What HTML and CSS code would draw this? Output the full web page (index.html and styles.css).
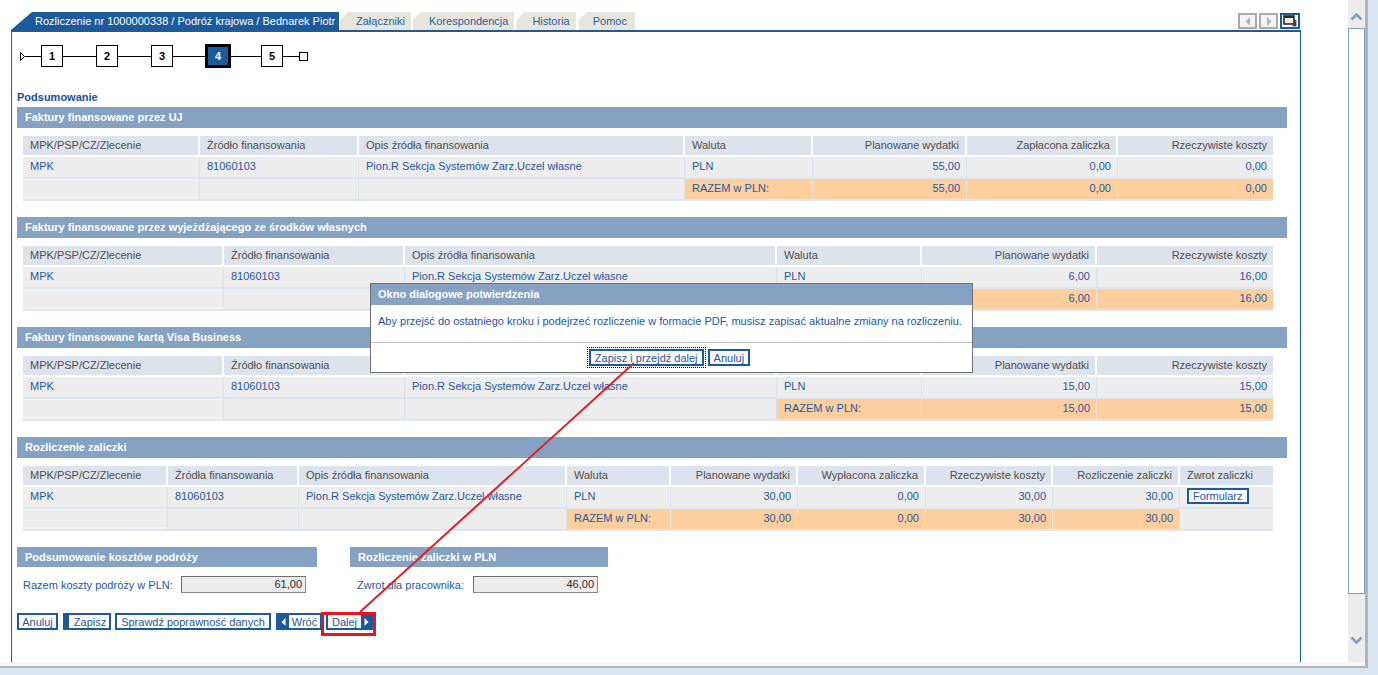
FILE: index.html
```html
<!DOCTYPE html>
<html lang="pl">
<head>
<meta charset="utf-8">
<title>Rozliczenie - Podsumowanie</title>
<link rel="stylesheet" href="styles.css">
</head>
<body>
<div class="window">
  <div class="page">
    <div class="tabbar">
      <div class="tabs">
        <div class="tab tab-active">Rozliczenie nr 1000000338 / Podróż krajowa / Bednarek Piotr</div>
        <div class="tab tab-1">Załączniki</div>
        <div class="tab">Korespondencja</div>
        <div class="tab">Historia</div>
        <div class="tab tab-last">Pomoc</div>
      </div>
      <div class="tabnav">
        <span class="navbtn navbtn-off"><svg width="6" height="9" viewBox="0 0 6 9"><polygon points="5,0 5,9 0.5,4.5" fill="#b4b4b4"/></svg></span>
        <span class="navbtn navbtn-off"><svg width="6" height="9" viewBox="0 0 6 9"><polygon points="1,0 1,9 5.5,4.5" fill="#b4b4b4"/></svg></span>
        <span class="navbtn navbtn-win"><svg width="14" height="12" viewBox="0 0 14 12"><rect x="1" y="1" width="10" height="8" fill="#efeee2" stroke="#2b2b2b" stroke-width="1.6"/><rect x="1" y="1" width="10" height="2" fill="#2b2b2b"/><path d="M9.5 10.5 H12.5 V7" fill="none" stroke="#2b2b2b" stroke-width="1.6"/><polygon points="10.5,6.5 14,6.5 12.5,4.5" fill="#2b2b2b"/></svg></span>
      </div>
    </div>

    <div class="frame">
      <div class="steps">
        <svg class="step-start" width="5" height="9" viewBox="0 0 5 9"><polygon points="0.5,0.5 4.5,4.5 0.5,8.5" fill="#fff" stroke="#000" stroke-width="1"/></svg>
        <span class="step-line w16"></span>
        <span class="step">1</span>
        <span class="step-line w33"></span>
        <span class="step">2</span>
        <span class="step-line w33"></span>
        <span class="step">3</span>
        <span class="step-line w32"></span>
        <span class="step step-current">4</span>
        <span class="step-line w30"></span>
        <span class="step">5</span>
        <span class="step-line w16"></span>
        <span class="step-end"></span>
      </div>

      <div class="title">Podsumowanie</div>

      <div class="sec">
        <div class="sec-head">Faktury finansowane przez UJ</div>
        <table class="grid">
          <colgroup><col class="c177"><col class="c159"><col class="c326"><col class="c128"><col class="c154"><col class="c151"><col class="c155"></colgroup>
          <thead><tr><th>MPK/PSP/CZ/Zlecenie</th><th>Źródło finansowania</th><th>Opis źródła finansowania</th><th>Waluta</th><th class="num">Planowane wydatki</th><th class="num">Zapłacona zaliczka</th><th class="num">Rzeczywiste koszty</th></tr></thead>
          <tbody>
            <tr><td>MPK</td><td>81060103</td><td>Pion.R Sekcja Systemów Zarz.Uczel własne</td><td>PLN</td><td class="num">55,00</td><td class="num">0,00</td><td class="num">0,00</td></tr>
            <tr><td class="blank"></td><td></td><td></td><td class="sum">RAZEM w PLN:</td><td class="num sum">55,00</td><td class="num sum">0,00</td><td class="num sum">0,00</td></tr>
          </tbody>
        </table>
      </div>

      <div class="sec">
        <div class="sec-head">Faktury finansowane przez wyjeżdżającego ze środków własnych</div>
        <table class="grid">
          <colgroup><col class="c201"><col class="c181"><col class="c372"><col class="c145"><col class="c175"><col class="c176"></colgroup>
          <thead><tr><th>MPK/PSP/CZ/Zlecenie</th><th>Źródło finansowania</th><th>Opis źródła finansowania</th><th>Waluta</th><th class="num">Planowane wydatki</th><th class="num">Rzeczywiste koszty</th></tr></thead>
          <tbody>
            <tr><td>MPK</td><td>81060103</td><td>Pion.R Sekcja Systemów Zarz.Uczel własne</td><td>PLN</td><td class="num">6,00</td><td class="num">16,00</td></tr>
            <tr><td class="blank"></td><td></td><td></td><td class="sum">RAZEM w PLN:</td><td class="num sum">6,00</td><td class="num sum">16,00</td></tr>
          </tbody>
        </table>
      </div>

      <div class="sec">
        <div class="sec-head">Faktury finansowane kartą Visa Business</div>
        <table class="grid">
          <colgroup><col class="c201"><col class="c181"><col class="c372"><col class="c145"><col class="c175"><col class="c176"></colgroup>
          <thead><tr><th>MPK/PSP/CZ/Zlecenie</th><th>Źródło finansowania</th><th>Opis źródła finansowania</th><th>Waluta</th><th class="num">Planowane wydatki</th><th class="num">Rzeczywiste koszty</th></tr></thead>
          <tbody>
            <tr><td>MPK</td><td>81060103</td><td>Pion.R Sekcja Systemów Zarz.Uczel własne</td><td>PLN</td><td class="num">15,00</td><td class="num">15,00</td></tr>
            <tr><td class="blank"></td><td></td><td></td><td class="sum">RAZEM w PLN:</td><td class="num sum">15,00</td><td class="num sum">15,00</td></tr>
          </tbody>
        </table>
      </div>

      <div class="sec">
        <div class="sec-head">Rozliczenie zaliczki</div>
        <table class="grid">
          <colgroup><col class="c145"><col class="c131"><col class="c268"><col class="c104"><col class="c127"><col class="c128"><col class="c127"><col class="c127"><col class="c93"></colgroup>
          <thead><tr><th>MPK/PSP/CZ/Zlecenie</th><th>Źródła finansowania</th><th>Opis źródła finansowania</th><th>Waluta</th><th class="num">Planowane wydatki</th><th class="num">Wypłacona zaliczka</th><th class="num">Rzeczywiste koszty</th><th class="num">Rozliczenie zaliczki</th><th>Zwrot zaliczki</th></tr></thead>
          <tbody>
            <tr><td>MPK</td><td>81060103</td><td>Pion.R Sekcja Systemów Zarz.Uczel własne</td><td>PLN</td><td class="num">30,00</td><td class="num">0,00</td><td class="num">30,00</td><td class="num">30,00</td><td class="btncell"><span class="btn btn-small">Formularz</span></td></tr>
            <tr><td class="blank"></td><td></td><td></td><td class="sum">RAZEM w PLN:</td><td class="num sum">30,00</td><td class="num sum">0,00</td><td class="num sum">30,00</td><td class="num sum">30,00</td><td></td></tr>
          </tbody>
        </table>
      </div>

      <div class="summary">
        <div class="sumbox sumbox-left">
          <div class="sec-head">Podsumowanie kosztów podróży</div>
          <div class="sumrow"><span class="lbl lbl-left">Razem koszty podróży w PLN:</span><span class="field field-left">61,00</span></div>
        </div>
        <div class="sumbox sumbox-right">
          <div class="sec-head">Rozliczenie zaliczki w PLN</div>
          <div class="sumrow"><span class="lbl lbl-right">Zwrot dla pracownika:</span><span class="field field-right">46,00</span></div>
        </div>
      </div>

      <div class="actions">
        <span class="btn b-anuluj">Anuluj</span>
        <span class="btn btn-thick b-zapisz">Zapisz</span>
        <span class="btn b-sprawdz">Sprawdź poprawność danych</span>
        <span class="btn btn-back"><span class="arrow-box"><svg width="5" height="8" viewBox="0 0 5 8"><polygon points="4.5,0 4.5,8 0.5,4" fill="#fff"/></svg></span><span class="btn-text">Wróć</span></span>
        <span class="btn btn-next"><span class="btn-text">Dalej</span><span class="arrow-box"><svg width="5" height="8" viewBox="0 0 5 8"><polygon points="0.5,0 0.5,8 4.5,4" fill="#fff"/></svg></span></span>
      </div>
    </div>
  </div>

  <div class="scrollbar">
    <svg class="sb-arrow sb-up" width="13" height="8" viewBox="0 0 13 8"><polyline points="1.5,6.5 6.5,1.5 11.5,6.5" fill="none" stroke="#7f9fc6" stroke-width="2.6"/></svg>
    <div class="sb-thumb"></div>
    <svg class="sb-arrow sb-down" width="13" height="8" viewBox="0 0 13 8"><polyline points="1.5,1.5 6.5,6.5 11.5,1.5" fill="none" stroke="#7f9fc6" stroke-width="2.6"/></svg>
  </div>
</div>

<div class="dialog">
  <div class="dialog-head">Okno dialogowe potwierdzenia</div>
  <div class="dialog-body">Aby przejść do ostatniego kroku i podejrzeć rozliczenie w formacie PDF, musisz zapisać aktualne zmiany na rozliczeniu.</div>
  <div class="dialog-foot">
    <span class="btn btn-focus">Zapisz i przejdź dalej</span>
    <span class="btn">Anuluj</span>
  </div>
</div>

<svg class="annot" width="1378" height="675" viewBox="0 0 1378 675">
  <line x1="360" y1="612" x2="634" y2="363" stroke="#e41e26" stroke-width="2"/>
  <rect x="322.5" y="613.5" width="52" height="21" fill="none" stroke="#e8141f" stroke-width="3"/>
</svg>
</body>
</html>
```

FILE: styles.css
```css
* { box-sizing: border-box; }

html, body {
  margin: 0;
  padding: 0;
}

body {
  width: 1378px;
  height: 675px;
  overflow: hidden;
  background: #dce6f0;
  font-family: "Liberation Sans", Arial, sans-serif;
  font-size: 11px;
  color: #1f56a0;
  position: relative;
}

.window {
  display: flex;
  width: 1368px;
  height: 668px;
  background: #f7f7fb;
  border-right: 3px solid #b4b4b4;
  border-bottom: 2px solid #b4b4b4;
}

.page {
  width: 1348px;
  height: 662px;
  background: #fff;
  overflow: hidden;
}

/* ---------- tabs ---------- */
.tabbar {
  display: flex;
  justify-content: space-between;
  align-items: flex-end;
  margin-left: 11px;
  width: 1290px;
  padding-top: 12px;
  border-bottom: 2px solid #1b5a9b;
}

.tabs {
  display: flex;
  align-items: flex-end;
}

.tab {
  height: 18px;
  line-height: 18px;
  padding: 0 6px 0 16px;
  margin-left: 2px;
  background: #e8e6dc;
  color: #2a5c9c;
  white-space: nowrap;
  clip-path: polygon(8px 0, 100% 0, 100% 100%, 0 100%, 0 8px);
}

.tab-active {
  margin-left: 0;
  width: 328px;
  padding: 0 0 0 24px;
  background: #1b5a9b;
  color: #fff;
  clip-path: polygon(21px 0, 100% 0, 100% 100%, 0 100%);
}

.tab-1 { margin-left: 1px; }
.tab-last { margin-left: 3px; padding: 0 8px 0 14px; }

.tabnav {
  display: flex;
  gap: 2px;
  margin-bottom: 1px;
  margin-right: 1px;
}

.navbtn {
  width: 19px;
  height: 16px;
  display: flex;
  align-items: center;
  justify-content: center;
  border: 2px solid #a9a9a9;
  background: #f4f4f4;
}

.navbtn-win {
  width: 20px;
  border-color: #1b5a9b;
  background: #fff;
}

/* ---------- frame ---------- */
.frame {
  margin-left: 11px;
  width: 1290px;
  height: 630px;
  border-left: 1px solid #1b5a9b;
  border-right: 1px solid #1b5a9b;
  padding: 12px 0 0 5px;
}

.steps {
  display: flex;
  align-items: center;
  height: 24px;
  margin-left: 3px;
}

.step-start { display: block; }

.step-line {
  height: 1px;
  background: #000;
}
.w16 { width: 16px; }
.w30 { width: 30px; }
.w32 { width: 32px; }
.w33 { width: 33px; }

.step {
  width: 22px;
  height: 22px;
  border: 1px solid #000;
  background: #fff;
  color: #000;
  font-weight: bold;
  display: flex;
  align-items: center;
  justify-content: center;
}

.step-current {
  width: 26px;
  height: 24px;
  border: 3px solid #000;
  background: #1b5a9b;
  color: #fff;
}

.step-end {
  width: 9px;
  height: 9px;
  border: 1px solid #000;
  background: #fff;
}

.title {
  margin-top: 23px;
  height: 13px;
  line-height: 13px;
  font-weight: bold;
  color: #1b4f94;
  margin-bottom: 3px;
}

/* ---------- sections & grids ---------- */
.sec-head {
  height: 21px;
  line-height: 21px;
  padding-left: 8px;
  background: #85a2c2;
  color: #fff;
  font-weight: bold;
  white-space: nowrap;
}

.sec .sec-head { width: 1270px; }

.grid {
  table-layout: fixed;
  width: 1250px;
  border-collapse: separate;
  border-spacing: 0;
  margin: 8px 0 16px 6px;
}

.grid th {
  height: 21px;
  padding: 0 6px 2px 7px;
  background: #dde3ec;
  border-right: 2px solid #fff;
  border-bottom: 2px solid #fff;
  font-weight: normal;
  color: #4d4d4d;
  text-align: left;
  white-space: nowrap;
}

.grid td {
  height: 22px;
  padding: 0 6px 3px 7px;
  background: #ededed;
  border-right: 1px solid #dbe2eb;
  border-bottom: 2px solid #dfe6ee;
  color: #1f56a0;
  white-space: nowrap;
  overflow: hidden;
}

.grid th:last-child, .grid td:last-child { border-right: 0; }

.grid .num { text-align: right; }
.grid td.sum { background: #fdcf9f; border-right-color: #ece4da; }
.grid td.blank { box-shadow: inset 0 1px 0 #f6f6f6, inset 0 -2px 0 #f3f3f3; }

.grid td.btncell { vertical-align: top; padding-top: 1px; padding-bottom: 0; }

.c93 { width: 93px; }
.c104 { width: 104px; }
.c127 { width: 127px; }
.c128 { width: 128px; }
.c131 { width: 131px; }
.c145 { width: 145px; }
.c151 { width: 151px; }
.c154 { width: 154px; }
.c155 { width: 155px; }
.c159 { width: 159px; }
.c175 { width: 175px; }
.c176 { width: 176px; }
.c177 { width: 177px; }
.c181 { width: 181px; }
.c201 { width: 201px; }
.c268 { width: 268px; }
.c326 { width: 326px; }
.c372 { width: 372px; }

/* ---------- summary ---------- */
.summary {
  display: flex;
  margin-top: 4px;
}

.sumbox-left { width: 300px; }
.sumbox-right { width: 258px; margin-left: 33px; }

.sumbox .sec-head { height: 20px; line-height: 20px; }

.sumrow {
  display: flex;
  align-items: center;
  margin-top: 9px;
  height: 17px;
}

.lbl { color: #1f56a0; white-space: nowrap; }
.lbl-left { width: 164px; padding-left: 6px; }
.lbl-right { width: 123px; padding-left: 7px; }

.field {
  height: 17px;
  line-height: 14px;
  padding-right: 3px;
  text-align: right;
  background: #ececec;
  border: 1px solid #8c8c8c;
  border-top-color: #6e6e6e;
  border-left-color: #6e6e6e;
  color: #2b2b2b;
}
.field-left { width: 125px; }
.field-right { width: 125px; }

/* ---------- buttons ---------- */
.actions {
  display: flex;
  gap: 4px;
  margin-top: 20px;
}

.btn {
  display: inline-flex;
  align-items: center;
  justify-content: center;
  height: 17px;
  padding: 0 4px;
  border: 2px solid #1b5a9b;
  background: #fff;
  color: #1f56a0;
  white-space: nowrap;
}

.b-anuluj { width: 41px; padding: 0; }
.b-zapisz { width: 48px; margin-left: 1px; }
.b-sprawdz { width: 156px; padding: 0; }
.btn-thick { border-left-width: 6px; padding: 0 2px 0 4px; }

.btn-back { width: 46px; padding: 0; margin-left: 1px; justify-content: flex-start; }
.btn-next { width: 48px; padding: 0; margin-left: 0; justify-content: flex-end; }

.arrow-box {
  display: flex;
  align-items: center;
  justify-content: center;
  width: 11px;
  height: 100%;
  background: #1b5a9b;
}

.btn-text { flex: 1; text-align: center; }

.btn-small { height: 16px; padding: 0 4px; }

/* ---------- scrollbar ---------- */
.scrollbar {
  width: 17px;
  height: 662px;
  background: #ececec;
  position: relative;
}

.sb-arrow {
  position: absolute;
  left: 2px;
}
.sb-up { top: 13px; }
.sb-down { top: 636px; }

.sb-thumb {
  position: absolute;
  left: 0;
  top: 28px;
  width: 17px;
  height: 566px;
  background: #fff;
  border: 1px solid #7f9fc4;
}

/* ---------- dialog (overlay) ---------- */
.dialog {
  position: absolute;
  left: 370px;
  top: 283px;
  width: 603px;
  height: 90px;
  background: #fff;
  border: 1px solid #707070;
}

.dialog-head {
  height: 21px;
  line-height: 21px;
  padding-left: 7px;
  background: #85a2c2;
  color: #fff;
  font-weight: bold;
}

.dialog-body {
  height: 38px;
  padding: 9px 0 0 7px;
  line-height: 14px;
  border-bottom: 1px solid #c4c4c4;
  color: #1f56a0;
}

.dialog-foot {
  display: flex;
  justify-content: center;
  gap: 4px;
  padding-top: 6px;
  padding-right: 4px;
}

.btn-focus {
  outline: 1px dotted #000;
  outline-offset: 1px;
}

/* ---------- annotation overlay ---------- */
.annot {
  position: absolute;
  left: 0;
  top: 0;
  pointer-events: none;
}
```
